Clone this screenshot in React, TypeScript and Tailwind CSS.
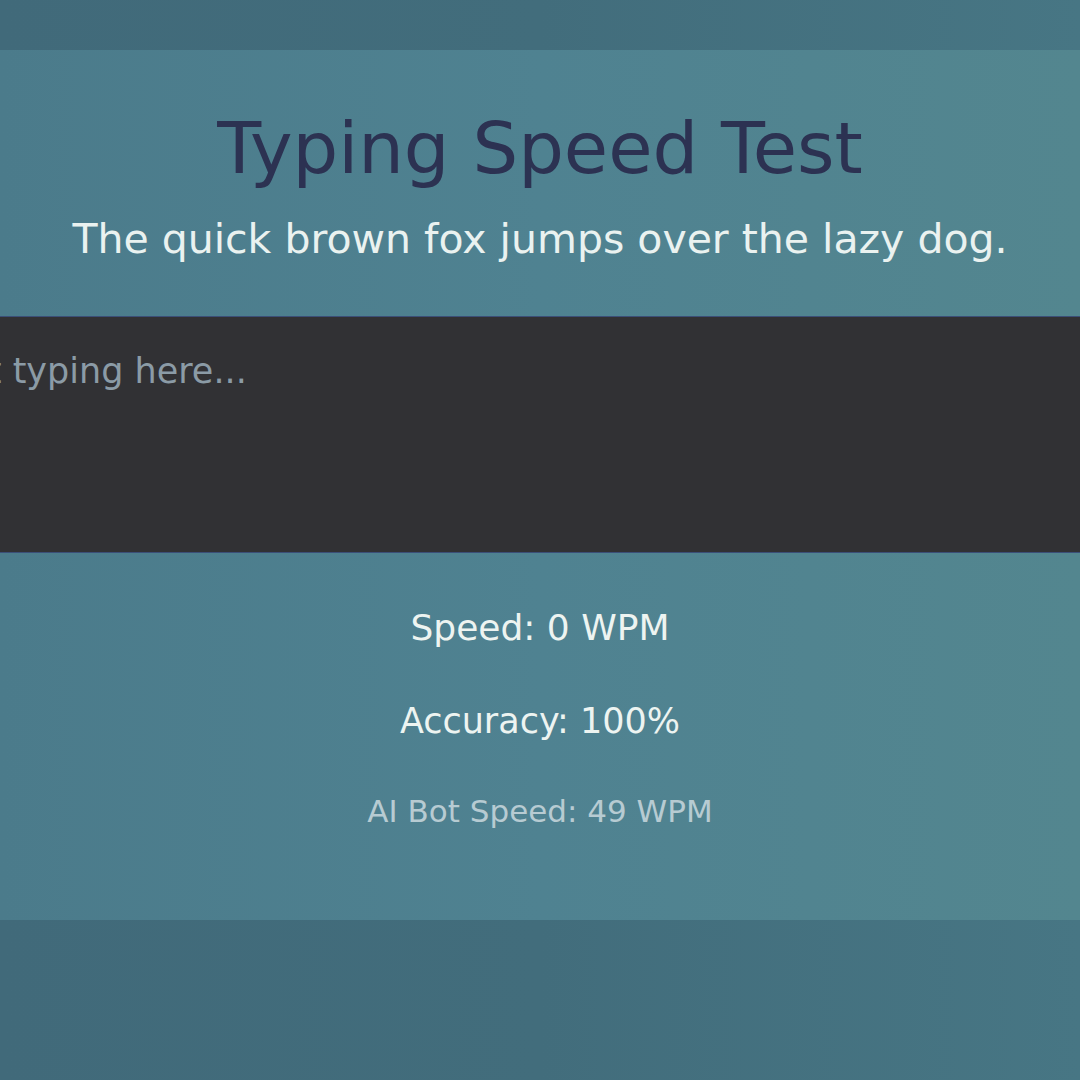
import React, { useState } from 'react';

const font = { fontFamily: '"DejaVu Sans", "Open Sans", sans-serif' };

const App: React.FC = () => {
  const [text, setText] = useState('');

  return (
    <div
      className="w-[1080px] h-[1080px] flex flex-col overflow-hidden bg-gradient-to-r from-[#416a7a] via-[#426d7c] to-[#477684]"
      style={font}
    >
      <div className="h-[50px] shrink-0" />

      <div className="h-[870px] shrink-0 flex flex-col items-center overflow-hidden bg-gradient-to-r from-[#4b7b8b] via-[#4f8291] to-[#53868f]">
        <h1 className="mt-[62px] text-[72px] leading-none font-normal text-[#2c3252]">
          Typing Speed Test
        </h1>
        <p className="mt-[35px] text-[41px] leading-none text-[#eaf2f0]">
          The quick brown fox jumps over the lazy dog.
        </p>

        <div className="mt-[56px] w-full overflow-hidden border-y border-[#3b4f78]">
          <textarea
            value={text}
            onChange={(e) => setText(e.target.value)}
            placeholder="Start typing here..."
            className="block -ml-[104px] w-[calc(100%+104px)] h-[235px] resize-none bg-[#313134] px-[20px] pt-[33px] text-[35px] leading-tight text-[#d0dde2] placeholder:text-[#8b9ba6] outline-none"
          />
        </div>

        <div className="mt-[57px] flex flex-col items-center">
          <p className="text-[36px] leading-none text-[#edf4f1]">Speed: 0 WPM</p>
          <p className="mt-[58px] text-[35px] leading-none text-[#edf4f1]">Accuracy: 100%</p>
          <p className="mt-[57px] text-[31px] leading-none text-[#b7cbd2]">AI Bot Speed: 49 WPM</p>
        </div>
      </div>

      <div className="flex-1" />
    </div>
  );
};

export default App;
